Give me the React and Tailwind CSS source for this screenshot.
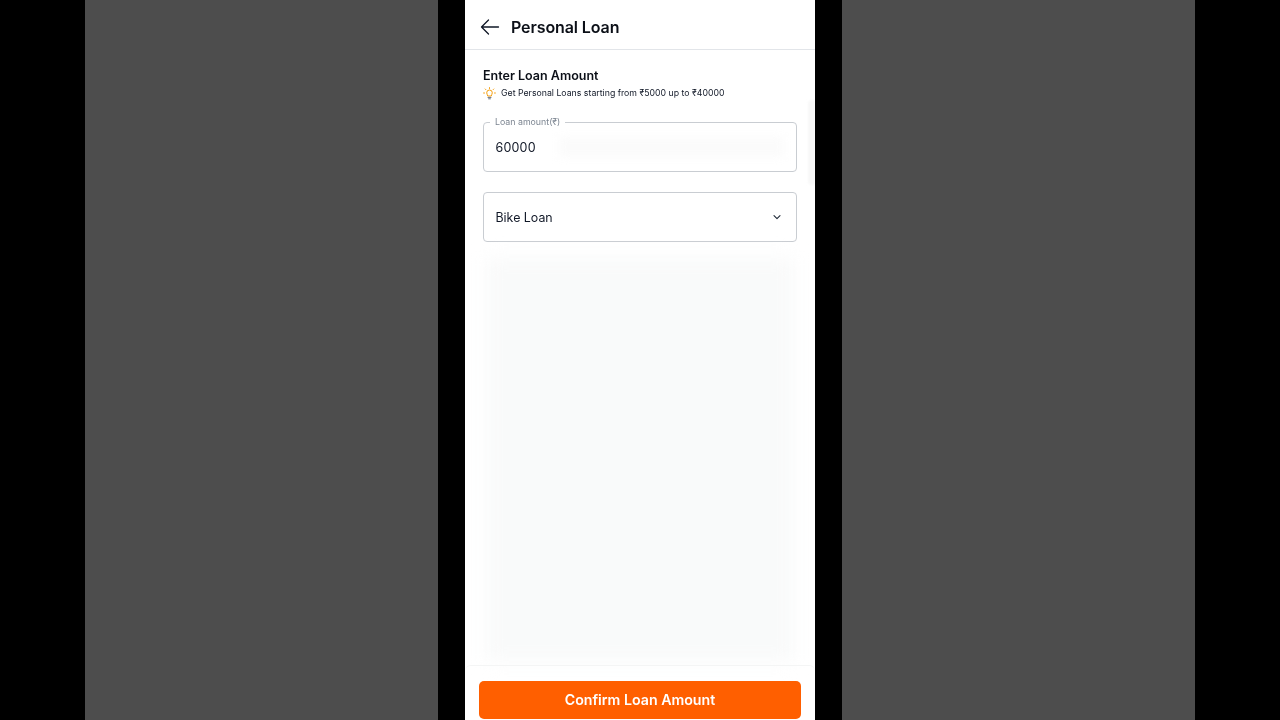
import React from "react";

function Side() {
  return <div className="w-[353px] h-full bg-[#4d4d4d]" />;
}

function Gap({ w }) {
  return <div className={w} />;
}

function Bulb() {
  return (
    <svg width="13" height="13" viewBox="0 0 13 13" fill="none" stroke="#f59e0b" strokeWidth="1" strokeLinecap="round" className="shrink-0">
      <path d="M4.7 8.6C4.7 7.6 3.7 7.2 3.7 5.8a2.8 2.8 0 0 1 5.6 0c0 1.4-1 1.8-1 2.8z" />
      <path d="M5 10.4h3" stroke="#6b7280" />
      <path d="M5.6 11.8h1.8" stroke="#6b7280" />
      <path d="M6.5.6v.9M2.2 2l.6.6M10.8 2l-.6.6M.6 6h.9M11.5 6h.9" />
    </svg>
  );
}

export default function App() {
  return (
    <div className="w-[1280px] h-[720px] bg-black flex overflow-hidden font-['Inter',sans-serif] text-[#111827]">
      <Gap w="w-[85px]" />
      <Side />
      <Gap w="w-[27px]" />
      <div className="relative w-[350px] h-full bg-white flex flex-col overflow-hidden blur-[0.35px]">
        <div className="absolute left-[343px] top-[100px] w-[7px] h-[85px] rounded-l-[4px] bg-[#f8f8f8] blur-[1px]" />
        <header className="relative h-[50px] shrink-0 border-b border-[#e2e5e9] flex items-center pl-[15px] pt-[5px] gap-[12px]">
          <svg width="20" height="20" viewBox="0 0 20 20" fill="none" stroke="#111827" strokeWidth="1.3" strokeLinecap="round" strokeLinejoin="round">
            <path d="M18.5 10H1.5M8.5 3 1.5 10l7 7" />
          </svg>
          <h1 className="-ml-[1px] text-[16px] leading-[20px] font-semibold tracking-[-0.1px] text-[#0b0f17]">Personal Loan</h1>
        </header>
        <main className="relative flex-1 flex flex-col px-[18px] min-h-0">
          <h2 className="mt-[17px] text-[12.5px] leading-[18px] font-semibold text-[#0b0f17]">Enter Loan Amount</h2>
          <div className="flex items-center gap-[5px] text-[8.76px] leading-[16px] text-[#111827]">
            <Bulb />
            <span>Get Personal Loans starting from ₹5000 up to ₹40000</span>
          </div>
          <div className="relative mt-[21px] h-[50px] shrink-0 rounded-[4px] border border-[#c9cdd2] flex items-center pl-[11.5px] pt-[3px] text-[12.5px] tracking-[0.2px] text-[#111827]">
            <span className="absolute left-[6px] -top-[7px] bg-white px-[5px] text-[8.8px] leading-[12px] tracking-normal text-[#7c8591]">Loan amount(₹)</span>
            60000
            <div className="absolute left-[75px] top-[14px] w-[225px] h-[20px] bg-[#fbfbfb] blur-[5px]" />
          </div>
          <div className="mt-[20px] h-[50px] shrink-0 rounded-[4px] border border-[#c9cdd2] flex items-center justify-between pl-[11.5px] pr-[14px] pt-[3px] text-[12.4px] text-[#111827]">
            <span>Bike Loan</span>
            <svg width="10" height="10" viewBox="0 0 10 10" fill="none" stroke="#1f2937" strokeWidth="1.1" strokeLinecap="round" strokeLinejoin="round" className="-mt-[3px]">
              <path d="M2 3.6 5 6.6l3-3" />
            </svg>
          </div>
          <div className="flex-1 mt-[16px] mb-[4px] mx-[4px] bg-[#f9fafa] blur-[9px]" />
        </main>
        <footer className="relative h-[55px] shrink-0 border-t border-[#f4f5f5] rounded-t-[6px] px-[14px] pt-[15px]">
          <button className="w-[322px] h-[38px] rounded-[5px] bg-[#ff5f00] text-white text-[14.2px] font-semibold flex items-center justify-center">
            Confirm Loan Amount
          </button>
        </footer>
      </div>
      <Gap w="w-[27px]" />
      <Side />
      <Gap w="w-[85px]" />
    </div>
  );
}
